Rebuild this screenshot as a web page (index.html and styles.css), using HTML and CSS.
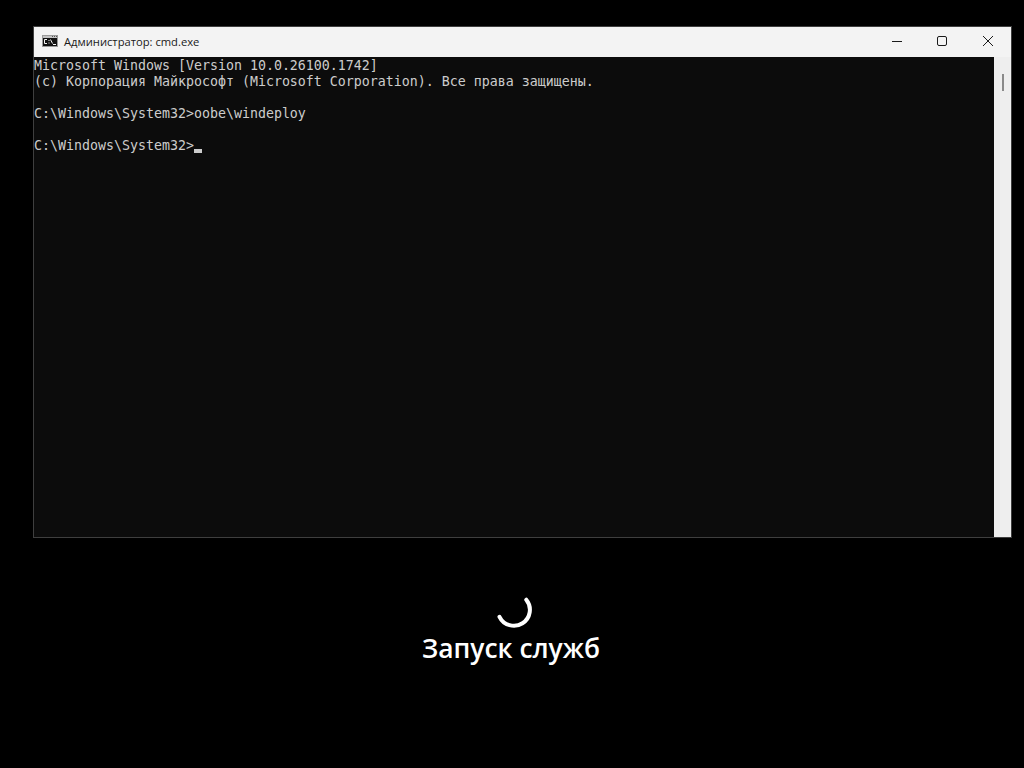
FILE: index.html
```html
<!DOCTYPE html>
<html lang="ru">
<head>
<meta charset="utf-8">
<title>Запуск служб</title>
<link rel="stylesheet" href="styles.css">
</head>
<body>
<main class="screen">
  <section class="window">
    <header class="titlebar">
      <svg class="app-icon" width="16" height="12" viewBox="0 0 16 12">
        <rect x="0" y="0" width="16" height="12" fill="#9a9a9a"/>
        <rect x="1" y="1" width="14" height="2" fill="#c4c4c4"/>
        <rect x="10" y="1" width="1" height="1" fill="#555"/>
        <rect x="12" y="1" width="1" height="1" fill="#555"/>
        <rect x="14" y="1" width="1" height="1" fill="#555"/>
        <rect x="1" y="3" width="14" height="8" fill="#111"/>
        <path d="M5 4.5H2.5v4H5M7 5v1M7 7.5v1M8.5 4.5l2 4M11 9.5h3" fill="none" stroke="#f5f5f5" stroke-width="1"/>
      </svg>
      <span class="title">Администратор: cmd.exe</span>
      <div class="controls">
        <button class="control" aria-label="Свернуть">
          <svg width="12" height="10" viewBox="0 0 12 10"><path d="M2 5.5h10" stroke="#1a1a1a" fill="none"/></svg>
        </button>
        <button class="control" aria-label="Развернуть">
          <svg width="10" height="10" viewBox="0 0 10 10"><rect x="0.5" y="0.5" width="9" height="9" rx="1.5" stroke="#1a1a1a" fill="none"/></svg>
        </button>
        <button class="control" aria-label="Закрыть">
          <svg width="10" height="10" viewBox="0 0 10 10"><path d="M0 0l10 10M10 0L0 10" stroke="#1a1a1a" fill="none"/></svg>
        </button>
      </div>
    </header>
    <div class="client">
      <pre class="console">Microsoft Windows [Version 10.0.26100.1742]
(c) Корпорация Майкрософт (Microsoft Corporation). Все права защищены.

C:\Windows\System32&gt;oobe\windeploy

C:\Windows\System32&gt;<span class="cursor"></span></pre>
      <div class="scrollbar"><div class="thumb"></div></div>
    </div>
  </section>
  <div class="status">
    <svg class="spinner" width="40" height="40" viewBox="0 0 40 40">
      <path d="M34.3 9.7A16 16 0 1 1 7.5 26.8" fill="none" stroke="#fff" stroke-width="4" stroke-linecap="round"/>
    </svg>
    <p class="status-text">Запуск служб</p>
  </div>
</main>
</body>
</html>
```
FILE: styles.css
```css
* { box-sizing: border-box; }
html, body { margin: 0; height: 100%; background: #000; }
.screen {
  height: 768px;
  padding-top: 26px;
  display: flex;
  flex-direction: column;
  overflow: hidden;
}
.window {
  width: 979px;
  height: 512px;
  margin-left: 33px;
  flex: none;
  border: 1px solid #3f3f3f;
  display: flex;
  flex-direction: column;
  background: #f2f2f2;
}
.titlebar {
  height: 30px;
  flex: none;
  display: flex;
  align-items: center;
  padding: 0 0 2px 8px;
  background: #f3f3f3;
}
.app-icon { flex: none; }
.title {
  margin-left: 6px;
  font: 11.2px "Open Sans", "Noto Sans", sans-serif;
  color: #1a1a1a;
  white-space: nowrap;
}
.controls { margin-left: auto; display: flex; }
.control {
  width: 46px;
  height: 28px;
  padding: 0;
  border: 0;
  background: transparent;
  display: flex;
  align-items: center;
  justify-content: center;
}
.client { flex: 1; display: flex; min-height: 0; }
.console {
  width: 960px;
  margin: 0;
  padding-top: 1px;
  background: #0c0c0c;
  color: #cccccc;
  font: 13.29px/16px "DejaVu Sans Mono", monospace;
  overflow: hidden;
}
.cursor {
  display: inline-block;
  width: 8px;
  height: 4px;
  vertical-align: -3px;
  background: #cccccc;
}
.scrollbar {
  flex: 1;
  background: #eeeeee;
  padding: 17px 0 0 8px;
}
.thumb { width: 2px; height: 17px; background: #8a8a8a; }
.status {
  margin-top: 52px;
  display: flex;
  flex-direction: column;
  align-items: center;
}
.spinner { display: block; }
.status-text {
  margin: 1px 2px 0 0;
  color: #fff;
  font: 600 26.4px/34px "Open Sans", "Noto Sans", sans-serif;
}
```
